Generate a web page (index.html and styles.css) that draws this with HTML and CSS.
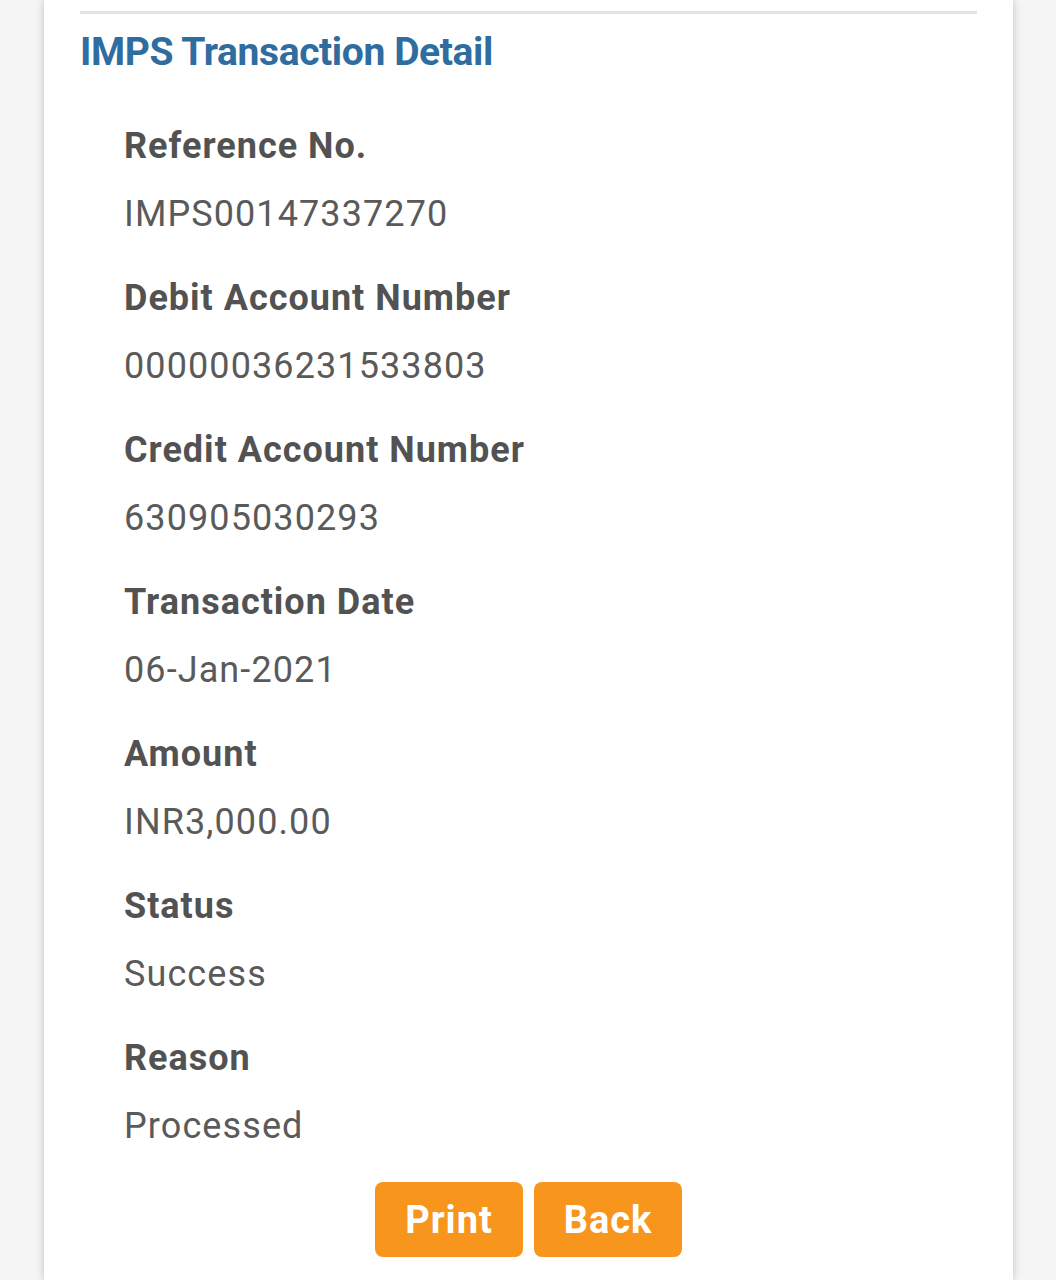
FILE: index.html
```html
<!DOCTYPE html>
<html>
<head>
<meta charset="utf-8">
<link rel="stylesheet" href="styles.css">
</head>
<body>
<div class="card">
  <div class="rule"></div>
  <h1 class="title">IMPS Transaction Detail</h1>
  <div class="details">
    <div class="item"><div class="label">Reference No.</div><div class="value">IMPS00147337270</div></div>
    <div class="item"><div class="label">Debit Account Number</div><div class="value">00000036231533803</div></div>
    <div class="item"><div class="label">Credit Account Number</div><div class="value">630905030293</div></div>
    <div class="item"><div class="label">Transaction Date</div><div class="value">06-Jan-2021</div></div>
    <div class="item"><div class="label">Amount</div><div class="value">INR3,000.00</div></div>
    <div class="item"><div class="label">Status</div><div class="value">Success</div></div>
    <div class="item"><div class="label">Reason</div><div class="value">Processed</div></div>
  </div>
  <div class="actions">
    <button class="btn">Print</button>
    <button class="btn">Back</button>
  </div>
</div>
</body>
</html>
```
FILE: styles.css
```css
html, body {
  margin: 0;
  padding: 0;
  background: #f5f5f5;
  font-family: Roboto, "Liberation Sans", sans-serif;
}
.card {
  margin-left: 44px;
  width: 969px;
  height: 1280px;
  background: #ffffff;
  box-shadow: 0 0 8px rgba(0, 0, 0, 0.22);
  padding: 11px 36px 0 36px;
  box-sizing: border-box;
}
.rule {
  height: 3px;
  background: #e3e3e3;
}
.title {
  margin: 12px 0 0 0;
  font-size: 39px;
  line-height: 52px;
  font-weight: 700;
  letter-spacing: -0.4px;
  color: #2f6c9f;
}
.details {
  margin-top: 34px;
  padding-left: 44px;
}
.item {
  margin-bottom: 16px;
}
.label {
  font-size: 36px;
  line-height: 68px;
  font-weight: 700;
  letter-spacing: 1px;
  color: #525252;
}
.value {
  font-size: 36px;
  line-height: 68px;
  letter-spacing: 1.1px;
  color: #5a5a5a;
}
.actions {
  display: flex;
  justify-content: center;
  gap: 11px;
  margin-top: 22px;
}
.btn {
  width: 148px;
  height: 75px;
  border: none;
  border-radius: 8px;
  background: #f7951d;
  color: #ffffff;
  font-family: Roboto, "Liberation Sans", sans-serif;
  font-size: 38px;
  font-weight: 700;
  letter-spacing: 1px;
  padding: 0;
}
```
